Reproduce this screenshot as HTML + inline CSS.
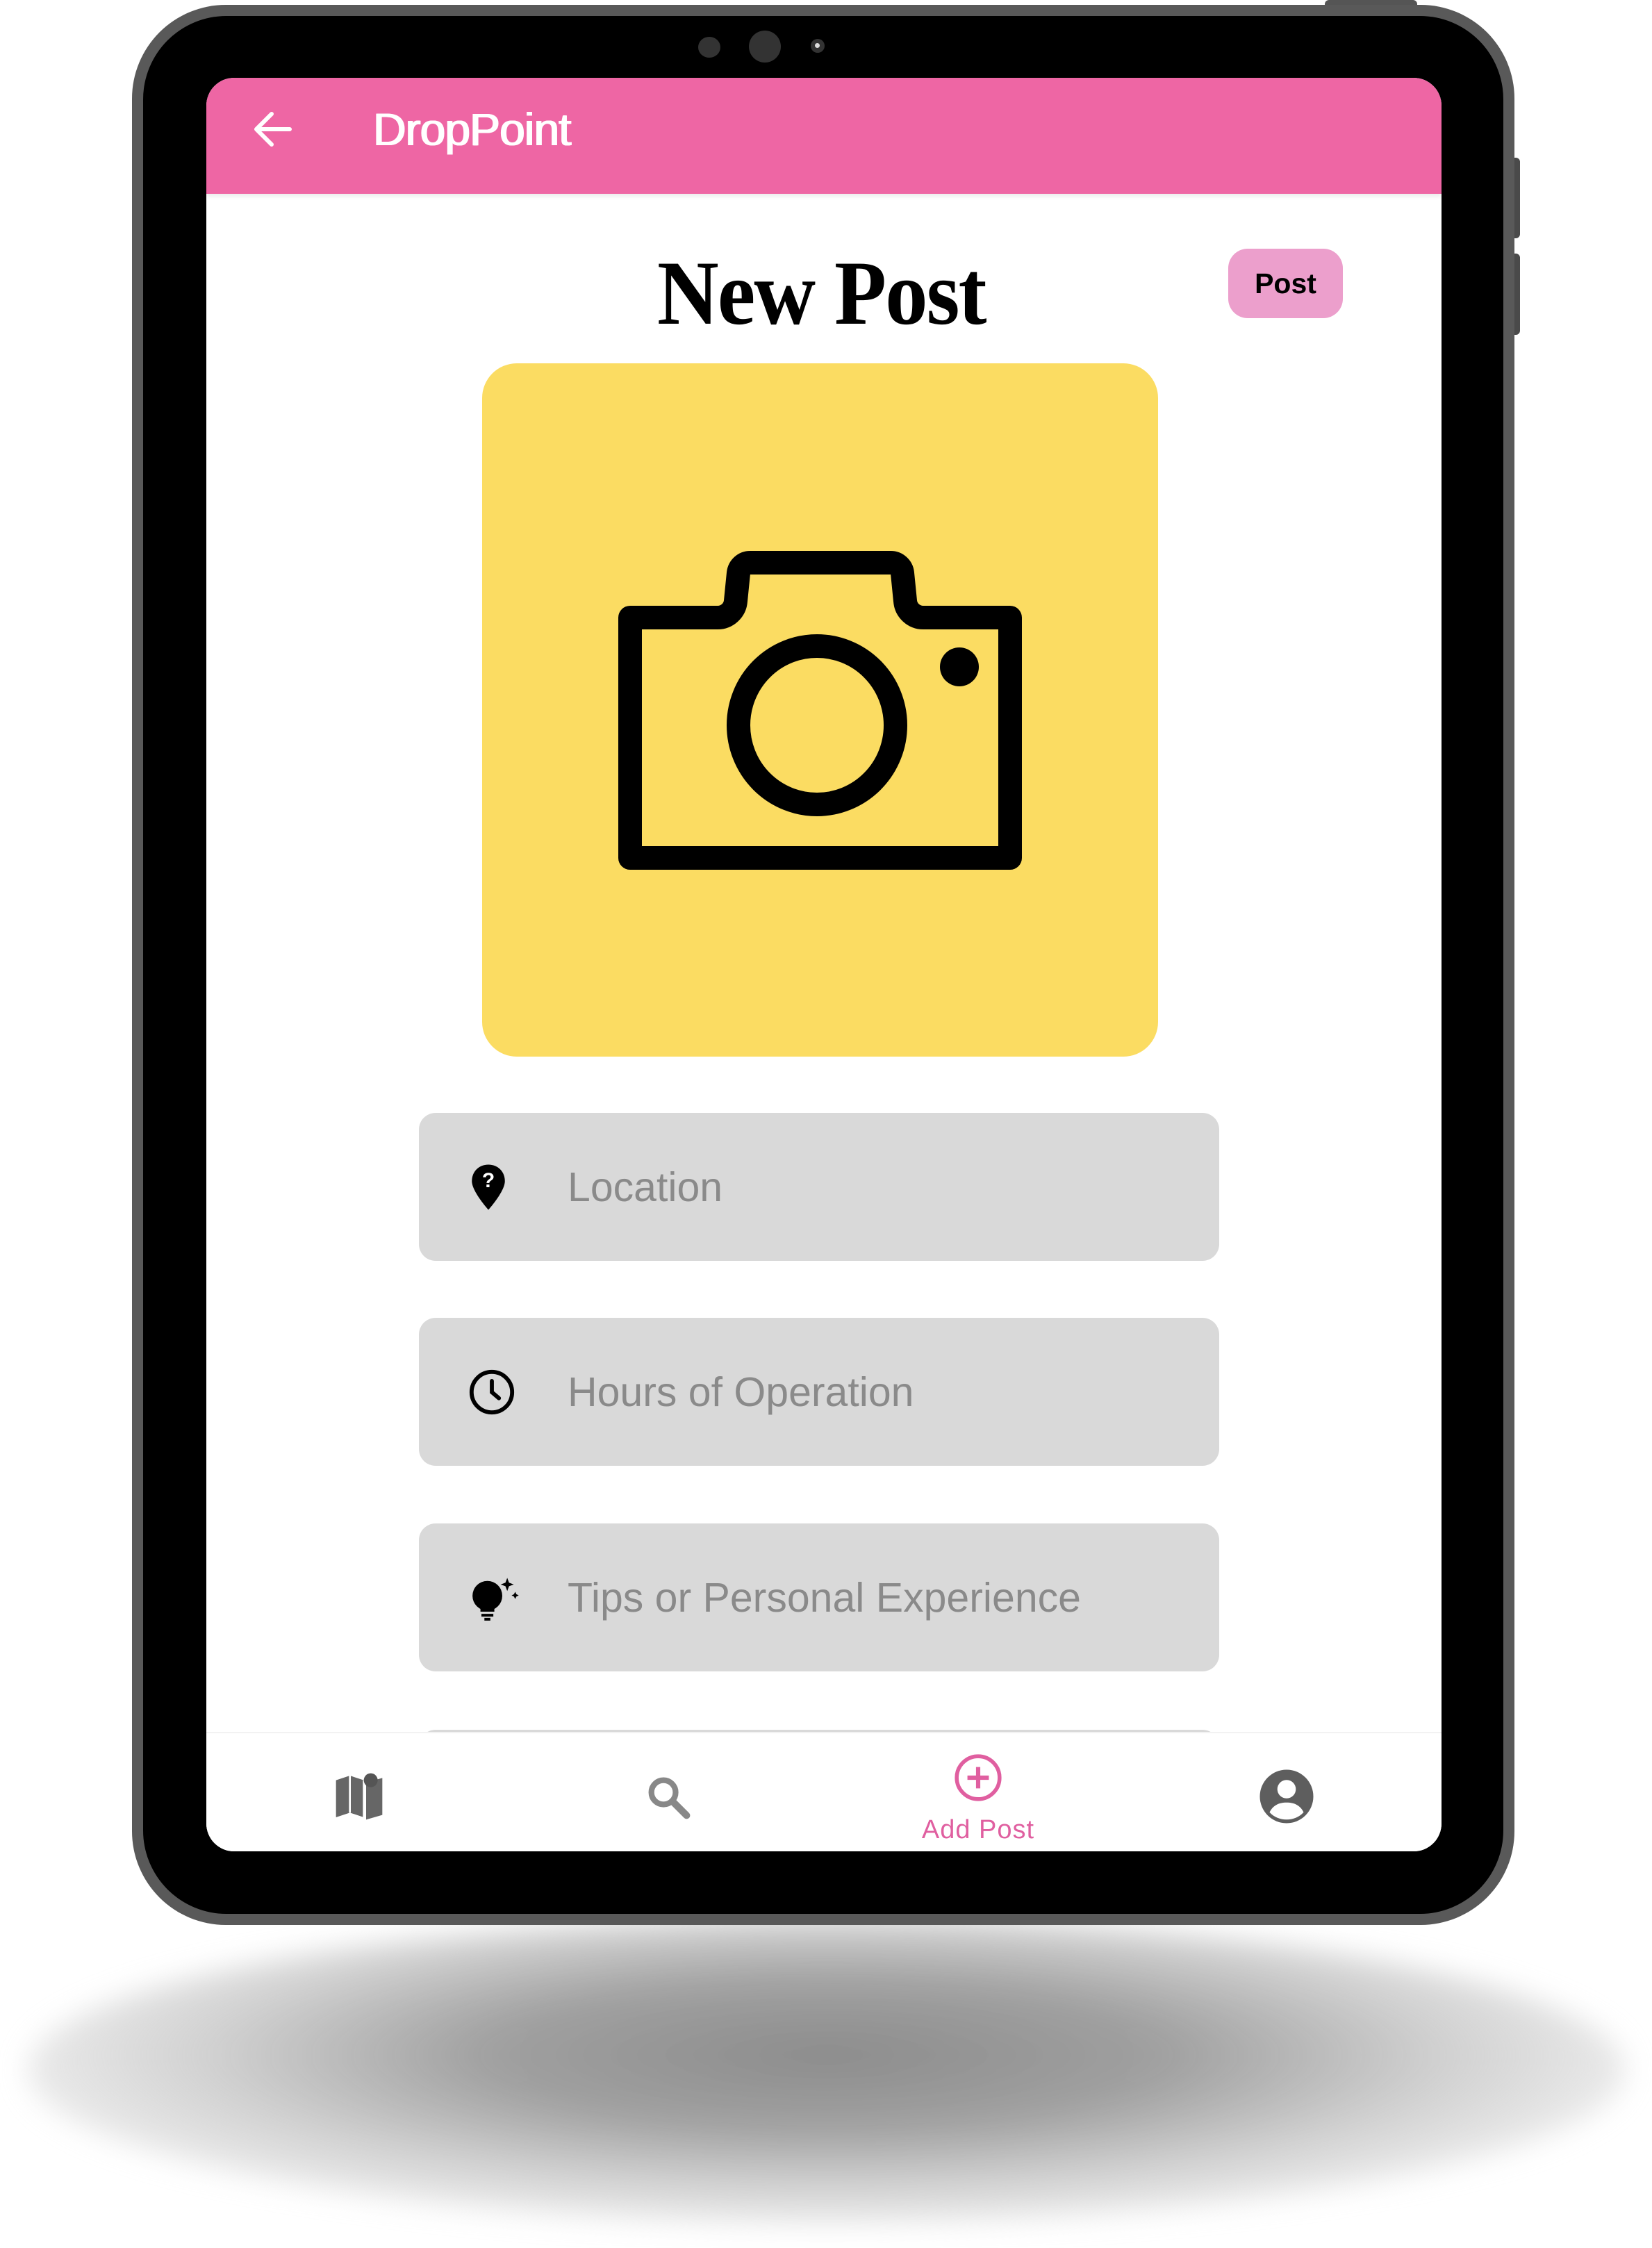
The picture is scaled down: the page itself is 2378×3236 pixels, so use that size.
<!DOCTYPE html>
<html><head><meta charset="utf-8"><style>
*{margin:0;padding:0;box-sizing:border-box}
body{width:2378px;height:3236px;background:#fff;position:relative;overflow:hidden;font-family:"Liberation Sans",sans-serif}
.abs{position:absolute}
.shadow{left:40px;top:2760px;width:2300px;height:440px;border-radius:50%;background:radial-gradient(ellipse at 50% 45%,rgba(140,140,140,1) 0%,rgba(155,155,155,.95) 30%,rgba(190,190,190,.7) 55%,rgba(230,230,230,.3) 80%,rgba(255,255,255,0) 100%);filter:blur(20px)}
.frame{left:190px;top:7px;width:1990px;height:2764px;background:#595959;border-radius:135px}
.bezel{left:206px;top:23px;width:1958px;height:2732px;background:#000;border-radius:120px}
.screen{left:297px;top:112px;width:1778px;height:2553px;background:#fff;border-radius:40px;overflow:hidden}
.field{left:306px;width:1152px;height:213px;background:#d9d9d9;border-radius:24px}
.field span{position:absolute;left:214px;top:50%;transform:translateY(-50%);font-size:59px;color:#8a8a8a;font-family:"Liberation Sans",sans-serif}
.field svg{position:absolute;left:70px;top:50%;transform:translateY(-50%)}
</style></head><body>
<div class="abs shadow"></div>
<div class="abs" style="left:1907px;top:0;width:133px;height:12px;background:#555;border-radius:6px 6px 0 0"></div>
<div class="abs" style="left:2172px;top:227px;width:16px;height:116px;background:#4a4a4a;border-radius:0 6px 6px 0"></div>
<div class="abs" style="left:2172px;top:365px;width:16px;height:117px;background:#4a4a4a;border-radius:0 6px 6px 0"></div>
<div class="abs frame"></div>
<div class="abs bezel"></div>
<div class="abs" style="left:1005px;top:53px;width:32px;height:30px;border-radius:50%;background:#333"></div>
<div class="abs" style="left:1078px;top:44px;width:46px;height:46px;border-radius:50%;background:#333"></div>
<div class="abs" style="left:1167px;top:56px;width:20px;height:20px;border-radius:50%;background:#333"><div style="position:absolute;left:6px;top:6px;width:7px;height:7px;border-radius:50%;background:#ddd"></div></div>

<div class="abs screen">
  <div class="abs" style="left:0;top:0;width:1778px;height:167px;background:#ee66a4;box-shadow:0 4px 6px rgba(0,0,0,.08)"></div>
  <svg class="abs" style="left:62px;top:44px" width="70" height="60" viewBox="0 0 70 60"><path d="M58 30H10M32 8L10 30l22 22" fill="none" stroke="#fff" stroke-width="6" stroke-linecap="round" stroke-linejoin="round"/></svg>
  <div class="abs" style="left:240px;top:34px;font-size:66px;color:#fff;line-height:80px;letter-spacing:-1px;text-shadow:1px 0 0 #fff,-1px 0 0 #fff">DropPoint</div>

  <div class="abs" style="left:649px;top:235px;font-family:'Liberation Serif',serif;font-weight:bold;font-size:132px;line-height:150px;color:#000;transform:scaleX(0.93);transform-origin:left top;letter-spacing:-2px">New Post</div>
  <div class="abs" style="left:1471px;top:246px;width:165px;height:100px;background:#ec9fcc;border-radius:28px;font-weight:bold;font-size:41px;line-height:100px;text-align:center;color:#000">Post</div>

  <div class="abs" style="left:397px;top:411px;width:973px;height:998px;background:#fbdc62;border-radius:50px"></div>
  <svg class="abs" style="left:0;top:0" width="1778" height="1400" viewBox="297 112 1778 1400">
    <path d="M907 889H1033a26 26 0 0 0 26-24l4-40a17 17 0 0 1 17-15H1282a17 17 0 0 1 17 15l4 40a26 26 0 0 0 26 24H1454V1235H907Z" fill="none" stroke="#000" stroke-width="34" stroke-linejoin="round"/>
    <ellipse cx="1176" cy="1044" rx="113" ry="114" fill="none" stroke="#000" stroke-width="34"/>
    <circle cx="1381" cy="960" r="28" fill="#000"/>
  </svg>

  <div class="abs field" style="top:1490px"><svg width="60" height="70" viewBox="0 0 24 28"><path d="M12 1C6.5 1 2.5 5 2.5 10.5c0 6 9.5 16.5 9.5 16.5s9.5-10.5 9.5-16.5C21.5 5 17.5 1 12 1z" fill="#000"/><text x="12" y="14" font-size="12" font-weight="bold" text-anchor="middle" fill="#fff" font-family="Liberation Sans">?</text></svg><span>Location</span></div>
  <div class="abs field" style="top:1785px"><svg width="70" height="70" viewBox="0 0 24 24"><circle cx="12" cy="12" r="10" fill="none" stroke="#000" stroke-width="2"/><path d="M12 6.5V12l3.5 3" fill="none" stroke="#000" stroke-width="2" stroke-linecap="round"/></svg><span>Hours of Operation</span></div>
  <div class="abs field" style="top:2081px"><svg width="80" height="80" viewBox="0 0 28 28"><circle cx="10" cy="13" r="7.5" fill="#000"/><path d="M6.5 18h7v3h-7z" fill="#000"/><path d="M7 22.8h6M8.5 24.8h3" stroke="#000" stroke-width="1.4"/><path d="M20 4l.9 2.4L23.3 7.3l-2.4.9L20 10.6l-.9-2.4L16.7 7.3l2.4-.9z M24 11l.6 1.2 1.2.6-1.2.6-.6 1.2-.6-1.2-1.2-.6 1.2-.6z" fill="#000"/></svg><span>Tips or Personal Experience</span></div>
  <div class="abs field" style="top:2378px"></div>

  <div class="abs" style="left:0;top:2381px;width:1778px;height:180px;background:#fff;border-top:2px solid #f2f2f2"></div>
  <svg class="abs" style="left:180px;top:2434px" width="80" height="80" viewBox="0 0 24 24"><path d="M2 5l6-2 6 2 0 16-6-2-6 2z M15 6l7-2v16l-7 2z" fill="#666"/><path d="M8 3v16M14 5v16" stroke="#fff" stroke-width=".8"/><circle cx="17" cy="5" r="3" fill="#555"/></svg>
  <svg class="abs" style="left:628px;top:2438px" width="76" height="76" viewBox="0 0 24 24"><circle cx="9.5" cy="9.5" r="5.5" fill="none" stroke="#888" stroke-width="2.6"/><path d="M14 14l6 6" stroke="#888" stroke-width="3.2" stroke-linecap="round"/></svg>
  <svg class="abs" style="left:1074px;top:2410px" width="74" height="74" viewBox="0 0 24 24"><circle cx="12" cy="12" r="10" fill="none" stroke="#e05fa0" stroke-width="1.8"/><path d="M12 7v10M7 12h10" stroke="#e05fa0" stroke-width="2"/></svg>
  <div class="abs" style="left:1011px;top:2501px;width:200px;text-align:center;font-size:38px;color:#e05fa0;letter-spacing:1px">Add Post</div>
  <svg class="abs" style="left:1513px;top:2432px" width="84" height="84" viewBox="0 0 24 24"><circle cx="12" cy="12" r="11" fill="#5e5e5e"/><circle cx="12" cy="9" r="3.8" fill="#fff"/><path d="M5 18.5c1.5-3 4-4 7-4s5.5 1 7 4c-1.8 2-4.3 3-7 3s-5.2-1-7-3z" fill="#fff"/></svg>
</div>
</body></html>
